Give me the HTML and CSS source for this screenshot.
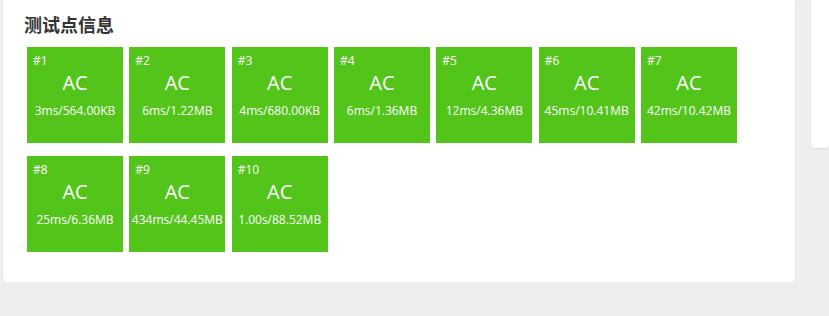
FILE: index.html
```html
<!DOCTYPE html>
<html lang="zh-CN">
<head>
    <meta charset="UTF-8">
    <meta name="viewport" content="width=device-width, initial-scale=1.0">
    <title>测试点信息</title>
    <link rel="stylesheet" href="styles.css">
</head>
<body>
    <div class="page">
        <div class="card main">
            <h3 class="card-title">测试点信息</h3>
            <div class="cases">
                <div class="case"><div class="case-id">#1</div><div class="case-status">AC</div><div class="case-info">3ms/564.00KB</div></div>
                <div class="case"><div class="case-id">#2</div><div class="case-status">AC</div><div class="case-info">6ms/1.22MB</div></div>
                <div class="case"><div class="case-id">#3</div><div class="case-status">AC</div><div class="case-info">4ms/680.00KB</div></div>
                <div class="case"><div class="case-id">#4</div><div class="case-status">AC</div><div class="case-info">6ms/1.36MB</div></div>
                <div class="case"><div class="case-id">#5</div><div class="case-status">AC</div><div class="case-info">12ms/4.36MB</div></div>
                <div class="case"><div class="case-id">#6</div><div class="case-status">AC</div><div class="case-info">45ms/10.41MB</div></div>
                <div class="case"><div class="case-id">#7</div><div class="case-status">AC</div><div class="case-info">42ms/10.42MB</div></div>
                <div class="case"><div class="case-id">#8</div><div class="case-status">AC</div><div class="case-info">25ms/6.36MB</div></div>
                <div class="case"><div class="case-id">#9</div><div class="case-status">AC</div><div class="case-info">434ms/44.45MB</div></div>
                <div class="case"><div class="case-id">#10</div><div class="case-status">AC</div><div class="case-info">1.00s/88.52MB</div></div>
            </div>
        </div>
        <div class="card side"></div>
    </div>
</body>
</html>
```

FILE: styles.css
```css
body {
    margin: 0;
    background: #eeeeee;
    font-family: "Open Sans", "Noto Sans CJK SC", sans-serif;
    color: #333;
}
.page {
    display: flex;
    align-items: flex-start;
    gap: 16px;
    padding-left: 3px;
}
.card {
    background: #fff;
    border-radius: 0 0 4px 4px;
    box-shadow: 0 1px 2px rgba(0, 0, 0, 0.08);
}
.main {
    width: 792px;
    flex-shrink: 0;
    box-sizing: border-box;
    padding: 11px 21px 30px;
}
.side {
    flex: 1;
    height: 148px;
}
.card-title {
    margin: 0 0 9px;
    font-family: "Noto Sans CJK SC", sans-serif;
    font-size: 18px;
    font-weight: bold;
    line-height: 27px;
    color: #333;
}
.cases {
    display: flex;
    flex-wrap: wrap;
    column-gap: 6.33px;
    row-gap: 13px;
    padding-left: 3px;
}
.case {
    width: 96px;
    height: 96px;
    box-sizing: border-box;
    padding-top: 6px;
    background: #52c41a;
    color: #fff;
    text-align: center;
}
.case-id {
    font-size: 12px;
    line-height: 16px;
    text-align: left;
    padding-left: 6px;
}
.case-status {
    margin-top: 1px;
    font-size: 20px;
    line-height: 26px;
}
.case-info {
    margin-top: 7px;
    font-size: 12px;
    line-height: 16px;
    white-space: nowrap;
}
```
